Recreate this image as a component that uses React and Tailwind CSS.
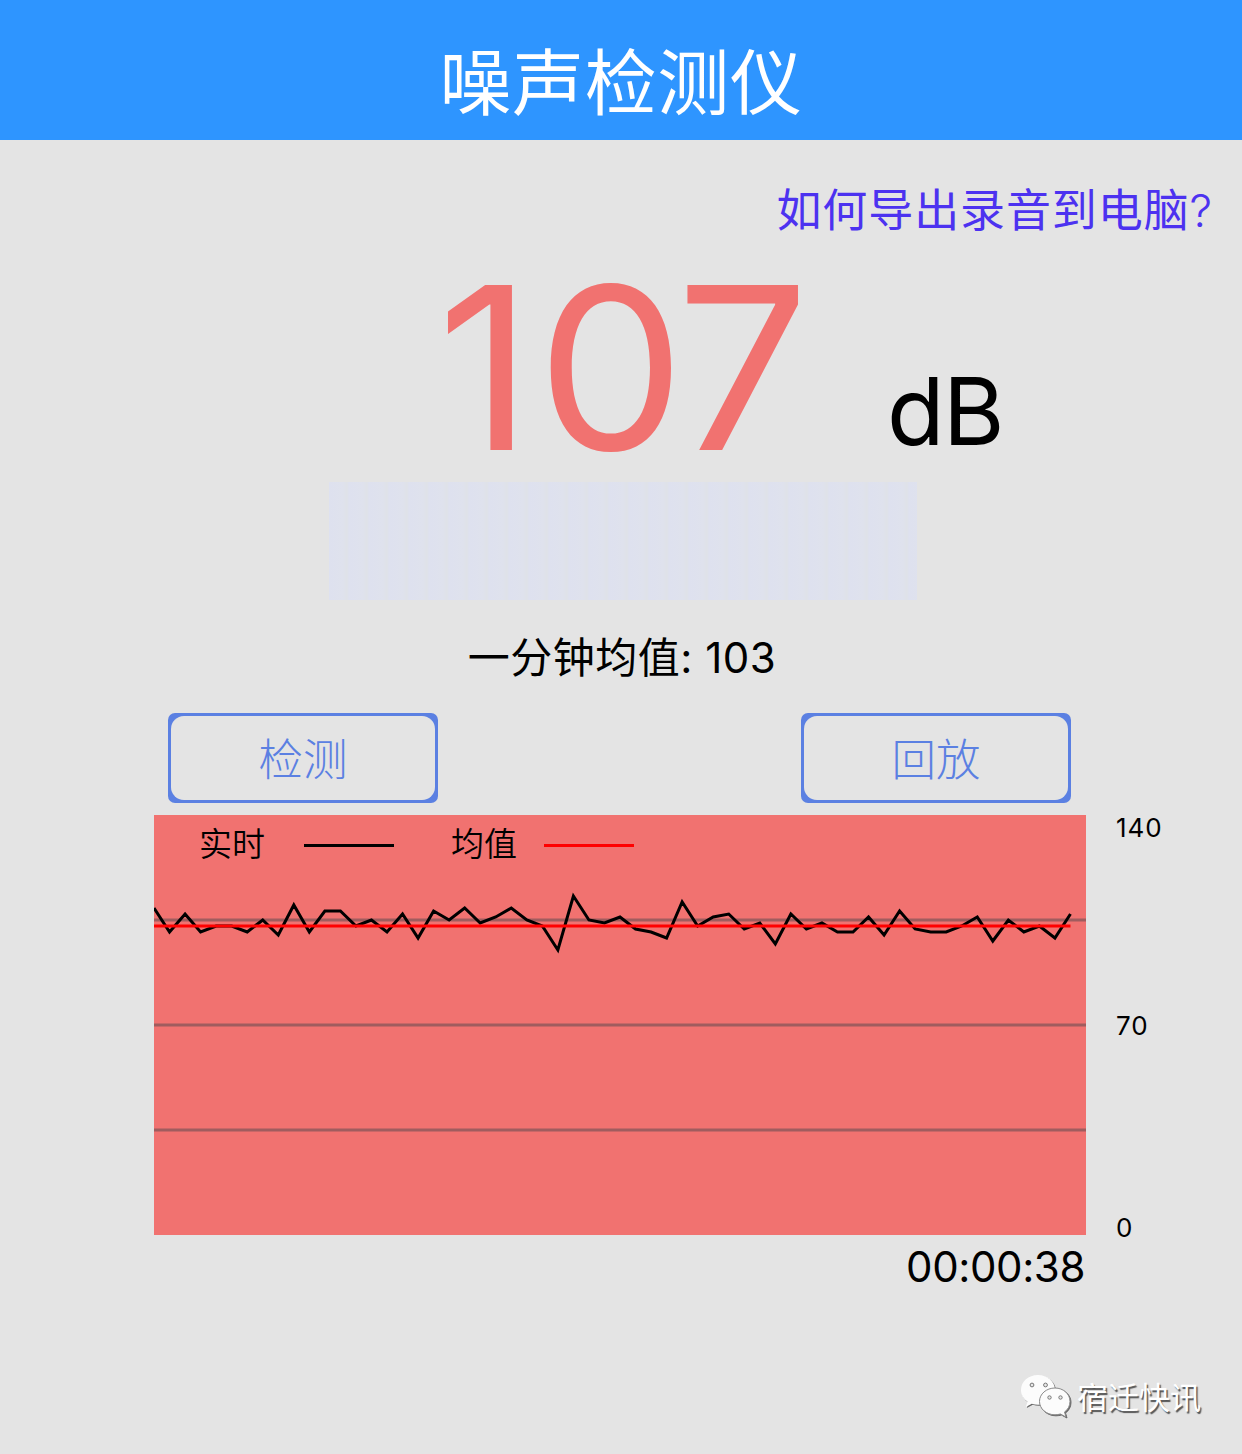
import React from "react";

// One reading per slot, in dB
const readings = [
  109, 101, 107, 101, 103, 103, 101, 105, 100, 110, 101, 108, 108, 103, 105,
  101, 107, 99, 108, 105, 109, 104, 106, 109, 105, 103, 95, 113, 105, 104, 106,
  102, 101, 99, 111, 103, 106, 107, 102, 104, 97, 107, 102, 104, 101, 101, 106,
  100, 108, 102, 101, 101, 103, 106, 98, 105, 101, 103, 99, 107,
];
const average = 103;

const CHART_WIDTH = 932;
const CHART_HEIGHT = 420;
const STEP = CHART_WIDTH / readings.length;
const MAX_DB = 140;

const toY = (db) => CHART_HEIGHT - (db * CHART_HEIGHT) / MAX_DB;

const NoiseChart = () => {
  const points = readings.map((db, i) => `${i * STEP},${toY(db)}`).join(" ");
  const lastX = (readings.length - 1) * STEP;

  return (
    <svg
      width={CHART_WIDTH}
      height={CHART_HEIGHT}
      className="col-start-1 row-start-1 block"
    >
      {[105, 70, 35].map((db) => (
        <line
          key={db}
          x1="0"
          x2={CHART_WIDTH}
          y1={toY(db)}
          y2={toY(db)}
          stroke="#a05c5e"
          strokeWidth="3"
        />
      ))}
      <polyline points={points} fill="none" stroke="#000" strokeWidth="3" />
      <line
        x1="0"
        x2={lastX}
        y1={toY(average)}
        y2={toY(average)}
        stroke="#ff0000"
        strokeWidth="3"
      />
    </svg>
  );
};

const OutlineButton = ({ children }) => (
  <button className="h-[90px] w-[270px] rounded-[7px] bg-[#5b80e2] p-[3px]">
    <span className="flex h-full w-full items-center justify-center rounded-[13px] bg-[#e4e4e4] pt-[5px] text-[44.5px] leading-none font-light text-[#5b80e2]">
      {children}
    </span>
  </button>
);

const WechatIcon = () => (
  <svg
    width="54"
    height="48"
    viewBox="0 0 54 48"
    className="drop-shadow-[1px_1px_0.5px_#666]"
  >
    <path
      d="M19 1C9.500 1 2 7.600 2 16c0 4.800 2.500 9 6.500 11.700L6.800 33l6-3.200c2 .6 4 1 6.200 1 9.400 0 17-6.600 17-14.900S28.400 1 19 1z"
      fill="#fcfcfc"
    />
    <path
      d="M36 14c-8.600 0-15.500 6-15.500 13.400S27.400 40.800 36 40.800c1.900 0 3.700-.3 5.400-.8l5.600 3-1.500-5c3.600-2.500 5.500-6.300 5.500-10.600 0-7.400-6.600-13.400-15-13.400z"
      fill="#fcfcfc"
      stroke="#8a8a8a"
      strokeWidth="1"
    />
    <g fill="#e8e8e8" stroke="#777" strokeWidth="1">
      <circle cx="13" cy="11" r="1.900" />
      <circle cx="26.500" cy="11" r="1.900" />
      <circle cx="30.500" cy="23.500" r="1.700" />
      <circle cx="41.500" cy="23.500" r="1.700" />
    </g>
  </svg>
);

const App = () => {
  return (
    <div className="flex h-[1454px] w-[1242px] flex-col overflow-hidden bg-[#e4e4e4] font-['Inter','Noto_Sans_CJK_SC',sans-serif] text-black">
      <header className="flex h-[140px] shrink-0 items-center justify-center bg-[#2e95ff] pt-[26px]">
        <h1 className="text-[72px] leading-none font-normal tracking-[0.6px] text-white">
          噪声检测仪
        </h1>
      </header>

      <div className="flex h-[140px] shrink-0 justify-end pt-[47px] pr-[29px]">
        <a className="text-[45px] leading-[48px] tracking-[0.9px] whitespace-nowrap text-[#4c32f0]">
          如何导出录音到电脑<span className="font-light">?</span>
        </a>
      </div>

      {/* Current level */}
      <div className="flex h-[202px] shrink-0 items-start pl-[437px]">
        <span className="w-[450px] origin-left scale-x-[1.035] text-[227px] leading-[176px] text-[#f17270]">
          <span className="tracking-[4px]">1</span>
          <span className="tracking-[-8.5px]">0</span>7
        </span>
        <span className="pt-[81px] text-[94px] leading-[100px] tracking-[-1.5px]">
          dB
        </span>
      </div>

      <div className="ml-[329px] h-[118px] w-[588px] shrink-0 bg-[repeating-linear-gradient(90deg,#dee1ef_0px,#dfe2ed_14px,#dfe2e8_18px,#dee1ef_20px)]"></div>

      <p className="flex h-[113px] shrink-0 items-center justify-center pt-[3px] pl-[2px] text-[42px] leading-none tracking-[0.5px]">
        一分钟均值: 103
      </p>

      <div className="flex h-[102px] shrink-0 justify-between pr-[171px] pl-[168px]">
        <OutlineButton>检测</OutlineButton>
        <OutlineButton>回放</OutlineButton>
      </div>

      {/* Chart with legend and scale */}
      <div className="flex h-[420px] shrink-0 pl-[154px]">
        <div className="grid w-[932px] bg-[#f17270]">
          <NoiseChart />
          <div className="col-start-1 row-start-1 flex h-[60px] items-center pl-[45px] text-[33px] leading-none font-[350]">
            <span className="w-[105px] pb-[2px]">实时</span>
            <span className="h-[3px] w-[90px] bg-black"></span>
            <span className="ml-[57px] w-[93px] pb-[2px]">均值</span>
            <span className="h-[3px] w-[90px] bg-[#ff0000]"></span>
          </div>
        </div>
        <div className="flex flex-col pl-[30px] text-[26px] leading-[26px] tracking-[1px]">
          <span>140</span>
          <span className="mt-[172px]">70</span>
          <span className="mt-[176px]">0</span>
        </div>
      </div>

      <p className="mt-[6px] w-[1085px] text-right text-[42px] leading-[52px] tracking-[-0.4px]">
        00:00:38
      </p>

      <footer className="mt-auto flex items-center justify-end pr-[41px] pb-[32px]">
        <WechatIcon />
        <span className="ml-1 text-[31px] leading-[48px] text-white [text-shadow:1.500px_1.500px_1px_#555]">
          宿迁快讯
        </span>
      </footer>
    </div>
  );
};

export default App;
